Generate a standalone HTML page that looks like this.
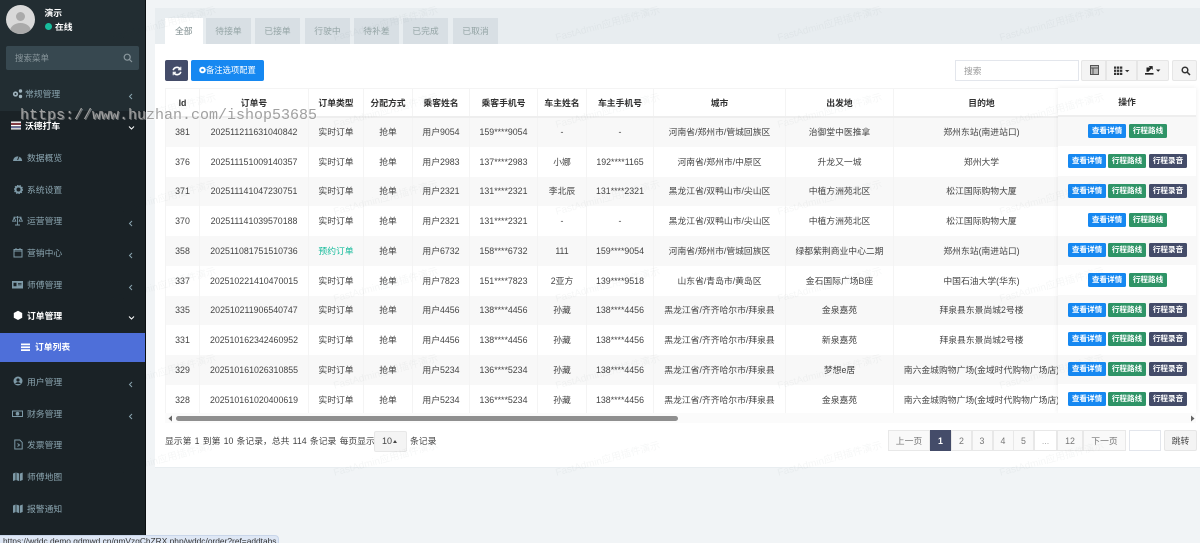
<!DOCTYPE html>
<html lang="zh-CN"><head><meta charset="utf-8"><title>订单列表</title>
<style>
*{box-sizing:border-box}
html,body{margin:0;padding:0;width:1200px;height:543px;overflow:hidden;background:#f1f4f6;font-family:"Liberation Sans","Noto Sans CJK SC",sans-serif;color:#444}
.abs{position:absolute}
#side{position:absolute;left:0;top:0;width:146px;height:543px;background:#1a2226;border-right:1px solid #0b0f11}
#side .top{position:absolute;left:0;top:0;width:145px;height:111px;background:#222d32}
.avatar{position:absolute;left:6px;top:5px;width:29px;height:29px;border-radius:50%;background:#d9d9d9;overflow:hidden}
.avatar:before{content:"";position:absolute;left:10px;top:6.5px;width:9px;height:9px;border-radius:50%;background:#aaa}
.avatar:after{content:"";position:absolute;left:4px;top:18px;width:21px;height:16px;border-radius:50%;background:#aaa}
.uname{position:absolute;left:44.5px;top:6.5px;font-size:8.8px;line-height:13px;color:#fff;font-weight:bold}
.ustat{position:absolute;left:44.5px;top:20.5px;font-size:8.8px;line-height:13px;color:#fff;font-weight:bold}
.ustat i{display:inline-block;width:7.5px;height:7.5px;border-radius:50%;background:#18bc9c;margin-right:3px;vertical-align:-.5px}
.sb{position:absolute;left:6px;top:46px;width:133px;height:24px;background:#374850;border-radius:2px;font-size:8.5px;line-height:24px;color:#8a979d;padding-left:9px}
.sb svg{position:absolute;left:117px;top:7px}
.mi{position:absolute;left:0;width:145px;height:20px;line-height:20px;font-size:8.8px;color:#8aa4af;white-space:nowrap}
.mi span{position:absolute;left:27px;top:0}
.mi svg.ic{position:absolute;left:12px;top:4px}
.mi svg.ar{position:absolute;left:128px;top:9px}
.mi.on{color:#fff;font-weight:bold}
.sub{position:absolute;left:0;top:333px;width:145px;height:29px;background:#4e6fd9;color:#fff;font-size:8.8px;line-height:29px;font-weight:bold}
.sub span{position:absolute;left:35px;top:0}
.sub svg{position:absolute;left:21px;top:10px}
#panel{position:absolute;left:155px;top:8px;width:1045px;height:459.5px;background:#fff;border-bottom:1px solid #e8edf0}
#tabs{position:absolute;left:0;top:0;width:1045px;height:36px;background:#e8edf0}
.tab{position:absolute;top:10px;height:26px;width:45px;line-height:27px;text-align:center;font-size:8.8px;color:#95a5a6;background:#d8dfe4}
.tab.on{background:#fff;color:#7b8a8b}
.btn{position:absolute;border-radius:2px;color:#fff}
#tbl{position:absolute;left:165px;top:88px;width:1031px;height:325px;overflow:hidden}
table{border-collapse:collapse;table-layout:fixed;width:1031px}
th,td{padding:0;text-align:center;font-size:8.8px;line-height:12px;white-space:nowrap;overflow:hidden;border-left:1px solid #f4f4f4;border-right:1px solid #f4f4f4;color:#444}
th{height:28.5px;font-weight:bold;color:#333;border-top:1px solid #f4f4f4;border-bottom:2px solid #eee}
td{height:29.75px}
tbody tr:nth-child(odd) td{background:#f8f8f8}
td.g{color:#18bc9c}
#op{position:absolute;left:1058px;top:88px;width:138px;height:325px;background:#fff;box-shadow:0 0 5px rgba(0,0,0,.08);font-size:8.8px}
#op .h{position:absolute;left:0;top:0;width:138px;height:28.5px;line-height:28px;text-align:center;font-weight:bold;color:#333;border-bottom:2px solid #eee}
#op .r{position:absolute;left:0;width:138px;height:29.75px}
#op .r.o{background:#f8f8f8}
#op b{position:absolute;top:7.5px;width:38px;height:14px;line-height:14.5px;text-align:center;font-size:7.6px;color:#fff;font-weight:bold;border-radius:1.5px}
b.a{background:#1688f1}b.c{background:#2f9467}b.d{background:#444c69}
#scroll{position:absolute;left:165px;top:413px;width:1031px;height:10px;background:#fbfbfb}
#scroll i{position:absolute;left:11px;top:2.5px;height:5.5px;width:502px;background:#8f8f8f;border-radius:3px}
.foot{position:absolute;left:165px;top:434px;font-size:8.8px;word-spacing:.8px;line-height:14px;color:#444;white-space:nowrap}
.sel{position:absolute;left:374px;top:431px;width:33px;height:21px;background:#f4f4f4;border:1px solid #e8e8e8;border-radius:2px;font-size:9px;line-height:19.5px;padding-left:7px;color:#444}
.sel i{position:absolute;left:18px;top:8px;width:0;height:0;border-left:2.5px solid transparent;border-right:2.5px solid transparent;border-bottom:3px solid #444}
.pg{position:absolute;top:429.5px;height:21.5px;line-height:21px;text-align:center;font-size:8.8px;color:#777;background:#f9f9f9;border:1px solid #e8e8e8;margin-left:-1px}
.pg.on{background:#444c69;color:#fff;border-color:#444c69;font-weight:bold}
.tool{position:absolute;top:60px;height:21px;background:#f4f4f4;border:1px solid #e6e6e6}
.wm{position:absolute;font-size:10px;color:rgba(40,60,80,.045);transform:rotate(-15deg);white-space:nowrap;width:120px;text-align:center;line-height:14px;pointer-events:none}
#hz{position:absolute;left:20px;top:105px;font-family:"Liberation Mono",monospace;font-size:15px;line-height:22px;color:#a0a0a0;white-space:nowrap;text-shadow:1px 1px 0 rgba(255,255,255,.35)}
#stat{position:absolute;left:0;top:535px;width:279px;height:8px;background:#dee7f5;border-top-right-radius:4px;border:1px solid #c9d6ea;border-left:0;border-bottom:0;font-size:8.4px;line-height:11px;color:#333;padding-left:3px;overflow:hidden;white-space:nowrap}
</style></head><body>

<div id="side">
<div class="top"></div>
<div class="avatar"></div>
<div class="uname">演示</div>
<div class="ustat"><i></i>在线</div>
<div class="sb">搜索菜单<svg width="10" height="10" viewBox="0 0 10 10" fill="none" stroke="#8a979d" stroke-width="1.2"><circle cx="4.2" cy="4.2" r="3"/><path d="M6.4 6.4L9 9"/></svg></div>

<div class="mi" style="top:84px"><svg class="ic" width="11" height="11" viewBox="0 0 11 11" fill="#9fb3bd"><circle cx="3.5" cy="6" r="2.6"/><circle cx="8.5" cy="3" r="1.7"/><circle cx="8.5" cy="8.5" r="1.7"/><circle cx="3.5" cy="6" r="1" fill="#222d32"/></svg><span style="left:25px">常规管理</span><svg class="ar" width="6" height="7" viewBox="0 0 6 7" fill="none" stroke="#8aa4af"><path d="M4 1L1.5 3.5 4 6"/></svg></div>

<div class="mi on" style="top:116px"><svg class="ic" style="left:11px" width="11" height="11" viewBox="0 0 11 11"><path fill="#fff" d="M0 1.5h10v1.4H0z"/><path fill="#c9505a" d="M0 3.4h10v1.2H0z"/><path fill="#fff" d="M0 5h10v1.2H0z"/><path fill="#7c82b8" d="M0 6.6h10v1.2H0z"/><path fill="#fff" d="M0 8.2h10v1.3H0z"/></svg><span style="left:25px">沃德打车</span><svg class="ar" width="7" height="6" viewBox="0 0 7 6" fill="none" stroke="#fff"><path d="M1 1.5L3.5 4 6 1.5"/></svg></div>

<div class="mi" style="top:148px"><svg class="ic" style="left:13px;top:5px" width="10" height="10" viewBox="0 0 10 10" fill="#7d99a6"><path d="M0 8a4.6 4.6 0 1 1 9.2 0z"/><path d="M4.6 7L6 3.5" stroke="#1a2226"/></svg><span>数据概览</span></div>

<div class="mi" style="top:179.5px"><svg class="ic" style="left:13.5px;top:5px" width="9" height="9" viewBox="0 0 9 9"><circle cx="4.5" cy="4.5" r="3" fill="none" stroke="#7d99a6" stroke-width="2"/><circle cx="4.5" cy="4.5" r="4.2" fill="none" stroke="#7d99a6" stroke-width="1" stroke-dasharray="1.3 1.3"/></svg><span>系统设置</span></div>

<div class="mi" style="top:211px"><svg class="ic" width="11" height="11" viewBox="0 0 11 11" fill="none" stroke="#7d99a6" stroke-width=".9"><path d="M5.5 1v8.5M3 10h5M1.5 2.2h8M2.2 2.5L.6 6.2h3.2zM8.8 2.5L7.2 6.2h3.2z"/></svg><span>运营管理</span><svg class="ar" width="6" height="7" viewBox="0 0 6 7" fill="none" stroke="#8aa4af"><path d="M4 1L1.5 3.5 4 6"/></svg></div>

<div class="mi" style="top:243px"><svg class="ic" style="left:13px" width="10" height="11" viewBox="0 0 10 11" fill="none" stroke="#7d99a6"><path d="M1 2.5h8v7.5H1zM1 4h8M3 1v2M7 1v2"/></svg><span>营销中心</span><svg class="ar" width="6" height="7" viewBox="0 0 6 7" fill="none" stroke="#8aa4af"><path d="M4 1L1.5 3.5 4 6"/></svg></div>

<div class="mi" style="top:274.5px"><svg class="ic" width="11" height="11" viewBox="0 0 11 11"><path fill="#7d99a6" d="M0 2h11v7.5H0z"/><path fill="#1a2226" d="M1.5 3.8h3v3.5h-3zM6 4h3.5v.8H6zM6 5.5h3.5v.8H6z"/></svg><span>师傅管理</span><svg class="ar" width="6" height="7" viewBox="0 0 6 7" fill="none" stroke="#8aa4af"><path d="M4 1L1.5 3.5 4 6"/></svg></div>

<div class="mi on" style="top:306px"><svg class="ic" style="left:13px" width="10" height="11" viewBox="0 0 10 11" fill="#fff"><path d="M5 .8l4.2 2.2v4.8L5 10 .8 7.8V3z"/></svg><span>订单管理</span><svg class="ar" width="7" height="6" viewBox="0 0 7 6" fill="none" stroke="#fff"><path d="M1 1.5L3.5 4 6 1.5"/></svg></div>

<div class="sub"><svg width="9" height="9" viewBox="0 0 9 9" fill="#fff"><path d="M0 .5h9v1.7H0zM0 3.4h9v1.7H0zM0 6.3h9V8H0z"/></svg><span>订单列表</span></div>

<div class="mi" style="top:372px"><svg class="ic" style="left:12.5px" width="10" height="10" viewBox="0 0 10 10"><circle cx="5" cy="5" r="4.5" fill="#7d99a6"/><circle cx="5" cy="4" r="1.6" fill="#1a2226"/><path d="M2.2 8a3 3 0 0 1 5.6 0z" fill="#1a2226"/></svg><span>用户管理</span><svg class="ar" width="6" height="7" viewBox="0 0 6 7" fill="none" stroke="#8aa4af"><path d="M4 1L1.5 3.5 4 6"/></svg></div>

<div class="mi" style="top:403.5px"><svg class="ic" width="11" height="11" viewBox="0 0 11 11"><path fill="#7d99a6" d="M0 2.5h11v6.5H0z"/><path fill="#1a2226" d="M1 3.5h9v4.5H1z"/><circle cx="5.5" cy="5.7" r="1.8" fill="#7d99a6"/></svg><span>财务管理</span><svg class="ar" width="6" height="7" viewBox="0 0 6 7" fill="none" stroke="#8aa4af"><path d="M4 1L1.5 3.5 4 6"/></svg></div>

<div class="mi" style="top:435px"><svg class="ic" style="left:13.5px" width="9" height="11" viewBox="0 0 9 11" fill="none" stroke="#7d99a6"><path d="M.8 1h5l2.4 2.4V10H.8zM3.5 4.5l2 1.5-2 1.5"/></svg><span>发票管理</span></div>

<div class="mi" style="top:467px"><svg class="ic" style="left:13px" width="10" height="11" viewBox="0 0 10 11" fill="#7d99a6"><path d="M0 2.5l2.6-1v7.6L0 10zM3.4 1.5l2.8 1v7.6l-2.8-1zM7 2.5l2.7-1V9L7 10z"/></svg><span>师傅地图</span></div>

<div class="mi" style="top:498.5px"><svg class="ic" style="left:13px" width="10" height="11" viewBox="0 0 10 11" fill="#7d99a6"><path d="M0 2.5l2.6-1v7.6L0 10zM3.4 1.5l2.8 1v7.6l-2.8-1zM7 2.5l2.7-1V9L7 10z"/></svg><span>报警通知</span></div>
</div>

<div id="panel">
<div id="tabs">
<div class="tab on" style="left:10px;width:37.5px">全部</div>
<div class="tab" style="left:51px">待接单</div>
<div class="tab" style="left:100px">已接单</div>
<div class="tab" style="left:150px">行驶中</div>
<div class="tab" style="left:199px">待补差</div>
<div class="tab" style="left:248px">已完成</div>
<div class="tab" style="left:298px">已取消</div>
</div>
</div>

<div class="btn" style="left:165px;top:60px;width:23px;height:21px;background:#444c69"><svg style="position:absolute;left:6.5px;top:5.5px" width="10" height="10" viewBox="0 0 10 10" fill="none" stroke="#fff" stroke-width="1.6"><path d="M1.2 4.2A3.8 3.8 0 0 1 8 3M8.8 5.8A3.8 3.8 0 0 1 2 7"/><path d="M8.8 .8v3H6M1.2 9.2v-3H4" stroke-width="1"/></svg></div>
<div class="btn" style="left:191px;top:60px;width:72.5px;height:21px;background:#1688f1;font-size:8.3px;line-height:20px;padding-left:8px;white-space:nowrap"><svg style="vertical-align:-1px" width="7" height="8" viewBox="0 0 7 8"><circle cx="3.5" cy="4" r="2.3" fill="none" stroke="#fff" stroke-width="2"/></svg>备注选项配置</div>

<div class="abs" style="left:955px;top:60px;width:124px;height:21px;background:#fff;border:1px solid #e3e6ec;font-size:8.8px;line-height:20px;padding-left:8px;color:#999">搜索</div>
<div class="tool" style="left:1081px;width:25px;border-radius:2px 0 0 2px"><svg style="position:absolute;left:8px;top:4px" width="9" height="10" viewBox="0 0 9 10" fill="#bbb" stroke="#555"><path d="M.5.5h8v9h-8z"/><path d="M.5 3h8M3 3v6.5" fill="none"/></svg></div>
<div class="tool" style="left:1106px;width:31px"><svg style="position:absolute;left:6.5px;top:4.5px" width="16" height="10" viewBox="0 0 16 10" fill="#333"><path d="M0 .5h2.3v2.3H0zM3 .5h2.3v2.3H3zM6 .5h2.3v2.3H6zM0 3.6h2.3v2.3H0zM3 3.6h2.3v2.3H3zM6 3.6h2.3v2.3H6zM0 6.7h2.3V9H0zM3 6.7h2.3V9H3zM6 6.7h2.3V9H6z"/><path d="M11 4h4.4l-2.2 2.2z"/></svg></div>
<div class="tool" style="left:1137px;width:32px;border-radius:0 2px 2px 0"><svg style="position:absolute;left:7px;top:4px" width="17" height="10" viewBox="0 0 17 10" fill="#222"><path d="M0 8h8.5v1.6H0zM1.5 2.5h3.5L3.7 1l4 .1.1 3.9-1.4-1.5L3.5 6.8H1.5z"/><path d="M11 4.5h4.4l-2.2 2.2z"/></svg></div>
<div class="tool" style="left:1172px;width:25px;border-radius:2px"><svg style="position:absolute;left:7.5px;top:4.5px" width="10" height="10" viewBox="0 0 10 10" fill="none" stroke="#333" stroke-width="1.5"><circle cx="4" cy="4" r="2.8"/><path d="M6.2 6.2L9 9"/></svg></div>

<div id="tbl"><table>
<colgroup><col style="width:34px"><col style="width:109px"><col style="width:55px"><col style="width:49px"><col style="width:57px"><col style="width:68px"><col style="width:49px"><col style="width:67px"><col style="width:132px"><col style="width:108px"><col style="width:176px"><col style="width:127px"></colgroup>
<thead><tr><th>Id</th><th>订单号</th><th>订单类型</th><th>分配方式</th><th>乘客姓名</th><th>乘客手机号</th><th>车主姓名</th><th>车主手机号</th><th>城市</th><th>出发地</th><th>目的地</th><th></th></tr></thead>
<tbody>
<tr><td>381</td><td>202511211631040842</td><td>实时订单</td><td>抢单</td><td>用户9054</td><td>159****9054</td><td>-</td><td>-</td><td>河南省/郑州市/管城回族区</td><td>治御堂中医推拿</td><td>郑州东站(南进站口)</td><td></td></tr>
<tr><td>376</td><td>202511151009140357</td><td>实时订单</td><td>抢单</td><td>用户2983</td><td>137****2983</td><td>小娜</td><td>192****1165</td><td>河南省/郑州市/中原区</td><td>升龙又一城</td><td>郑州大学</td><td></td></tr>
<tr><td>371</td><td>202511141047230751</td><td>实时订单</td><td>抢单</td><td>用户2321</td><td>131****2321</td><td>李北辰</td><td>131****2321</td><td>黑龙江省/双鸭山市/尖山区</td><td>中植方洲苑北区</td><td>松江国际购物大厦</td><td></td></tr>
<tr><td>370</td><td>202511141039570188</td><td>实时订单</td><td>抢单</td><td>用户2321</td><td>131****2321</td><td>-</td><td>-</td><td>黑龙江省/双鸭山市/尖山区</td><td>中植方洲苑北区</td><td>松江国际购物大厦</td><td></td></tr>
<tr><td>358</td><td>202511081751510736</td><td class="g">预约订单</td><td>抢单</td><td>用户6732</td><td>158****6732</td><td>111</td><td>159****9054</td><td>河南省/郑州市/管城回族区</td><td>绿都紫荆商业中心二期</td><td>郑州东站(南进站口)</td><td></td></tr>
<tr><td>337</td><td>202510221410470015</td><td>实时订单</td><td>抢单</td><td>用户7823</td><td>151****7823</td><td>2亚方</td><td>139****9518</td><td>山东省/青岛市/黄岛区</td><td>金石国际广场B座</td><td>中国石油大学(华东)</td><td></td></tr>
<tr><td>335</td><td>202510211906540747</td><td>实时订单</td><td>抢单</td><td>用户4456</td><td>138****4456</td><td>孙藏</td><td>138****4456</td><td>黑龙江省/齐齐哈尔市/拜泉县</td><td>金泉嘉苑</td><td>拜泉县东景尚城2号楼</td><td></td></tr>
<tr><td>331</td><td>202510162342460952</td><td>实时订单</td><td>抢单</td><td>用户4456</td><td>138****4456</td><td>孙藏</td><td>138****4456</td><td>黑龙江省/齐齐哈尔市/拜泉县</td><td>新泉嘉苑</td><td>拜泉县东景尚城2号楼</td><td></td></tr>
<tr><td>329</td><td>202510161026310855</td><td>实时订单</td><td>抢单</td><td>用户5234</td><td>136****5234</td><td>孙藏</td><td>138****4456</td><td>黑龙江省/齐齐哈尔市/拜泉县</td><td>梦想e居</td><td>南六金城购物广场(金域时代购物广场店)</td><td></td></tr>
<tr><td>328</td><td>202510161020400619</td><td>实时订单</td><td>抢单</td><td>用户5234</td><td>136****5234</td><td>孙藏</td><td>138****4456</td><td>黑龙江省/齐齐哈尔市/拜泉县</td><td>金泉嘉苑</td><td>南六金城购物广场(金域时代购物广场店)</td><td></td></tr>
</tbody></table></div>

<div id="op">
<div class="h">操作</div>
<div class="r o" style="top:28.5px"><b class="a" style="left:30px">查看详情</b><b class="c" style="left:71px">行程路线</b></div>
<div class="r" style="top:58.25px"><b class="a" style="left:10px">查看详情</b><b class="c" style="left:50px">行程路线</b><b class="d" style="left:91px">行程录音</b></div>
<div class="r o" style="top:88px"><b class="a" style="left:10px">查看详情</b><b class="c" style="left:50px">行程路线</b><b class="d" style="left:91px">行程录音</b></div>
<div class="r" style="top:117.75px"><b class="a" style="left:30px">查看详情</b><b class="c" style="left:71px">行程路线</b></div>
<div class="r o" style="top:147.5px"><b class="a" style="left:10px">查看详情</b><b class="c" style="left:50px">行程路线</b><b class="d" style="left:91px">行程录音</b></div>
<div class="r" style="top:177.25px"><b class="a" style="left:30px">查看详情</b><b class="c" style="left:71px">行程路线</b></div>
<div class="r o" style="top:207px"><b class="a" style="left:10px">查看详情</b><b class="c" style="left:50px">行程路线</b><b class="d" style="left:91px">行程录音</b></div>
<div class="r" style="top:236.75px"><b class="a" style="left:10px">查看详情</b><b class="c" style="left:50px">行程路线</b><b class="d" style="left:91px">行程录音</b></div>
<div class="r o" style="top:266.5px"><b class="a" style="left:10px">查看详情</b><b class="c" style="left:50px">行程路线</b><b class="d" style="left:91px">行程录音</b></div>
<div class="r" style="top:296.25px"><b class="a" style="left:10px">查看详情</b><b class="c" style="left:50px">行程路线</b><b class="d" style="left:91px">行程录音</b></div>
</div>

<div id="scroll"><i></i>
<svg style="position:absolute;left:3px;top:2px" width="5" height="7"><path d="M4 .5v6L.5 3.5z" fill="#666"/></svg>
<svg style="position:absolute;left:1025px;top:2px" width="5" height="7"><path d="M1 .5v6l3.5-3z" fill="#666"/></svg>
</div>

<div class="foot">显示第 1 到第 10 条记录，总共 114 条记录 每页显示</div>
<div class="sel">10<i></i></div>
<div class="foot" style="left:410px">条记录</div>

<div class="pg" style="left:889px;width:42px">上一页</div>
<div class="pg on" style="left:931px;width:21px">1</div>
<div class="pg" style="left:952px;width:21px">2</div>
<div class="pg" style="left:972.5px;width:21px">3</div>
<div class="pg" style="left:993.5px;width:21px">4</div>
<div class="pg" style="left:1014px;width:21px">5</div>
<div class="pg" style="left:1035px;width:23px;background:#fff;color:#aaa">...</div>
<div class="pg" style="left:1058px;width:26px">12</div>
<div class="pg" style="left:1084px;width:43px">下一页</div>
<div class="abs" style="left:1129px;top:429.5px;width:32px;height:21.5px;background:#fff;border:1px solid #e3e6ec"></div>
<div class="abs" style="left:1164px;top:429.5px;width:33px;height:21.5px;background:#f4f4f4;border:1px solid #e6e6e6;border-radius:2px;font-size:8.8px;line-height:21px;text-align:center;color:#444">跳转</div>

<div class="wm" style="left:104px;top:18px">FastAdmin应用插件演示</div><div class="wm" style="left:326px;top:18px">FastAdmin应用插件演示</div><div class="wm" style="left:548px;top:18px">FastAdmin应用插件演示</div><div class="wm" style="left:770px;top:18px">FastAdmin应用插件演示</div><div class="wm" style="left:992px;top:18px">FastAdmin应用插件演示</div>
<div class="wm" style="left:104px;top:105px">FastAdmin应用插件演示</div><div class="wm" style="left:326px;top:105px">FastAdmin应用插件演示</div><div class="wm" style="left:548px;top:105px">FastAdmin应用插件演示</div><div class="wm" style="left:770px;top:105px">FastAdmin应用插件演示</div><div class="wm" style="left:992px;top:105px">FastAdmin应用插件演示</div>
<div class="wm" style="left:104px;top:192px">FastAdmin应用插件演示</div><div class="wm" style="left:326px;top:192px">FastAdmin应用插件演示</div><div class="wm" style="left:548px;top:192px">FastAdmin应用插件演示</div><div class="wm" style="left:770px;top:192px">FastAdmin应用插件演示</div><div class="wm" style="left:992px;top:192px">FastAdmin应用插件演示</div>
<div class="wm" style="left:104px;top:279px">FastAdmin应用插件演示</div><div class="wm" style="left:326px;top:279px">FastAdmin应用插件演示</div><div class="wm" style="left:548px;top:279px">FastAdmin应用插件演示</div><div class="wm" style="left:770px;top:279px">FastAdmin应用插件演示</div><div class="wm" style="left:992px;top:279px">FastAdmin应用插件演示</div>
<div class="wm" style="left:104px;top:366px">FastAdmin应用插件演示</div><div class="wm" style="left:326px;top:366px">FastAdmin应用插件演示</div><div class="wm" style="left:548px;top:366px">FastAdmin应用插件演示</div><div class="wm" style="left:770px;top:366px">FastAdmin应用插件演示</div><div class="wm" style="left:992px;top:366px">FastAdmin应用插件演示</div>
<div class="wm" style="left:104px;top:453px">FastAdmin应用插件演示</div><div class="wm" style="left:326px;top:453px">FastAdmin应用插件演示</div><div class="wm" style="left:548px;top:453px">FastAdmin应用插件演示</div><div class="wm" style="left:770px;top:453px">FastAdmin应用插件演示</div><div class="wm" style="left:992px;top:453px">FastAdmin应用插件演示</div>

<div id="hz">https://www.huzhan.com/ishop53685</div>
<div id="stat">https://wddc.demo.gdmwd.cn/gmVzgChZRX.php/wddc/order?ref=addtabs</div>
</body></html>
